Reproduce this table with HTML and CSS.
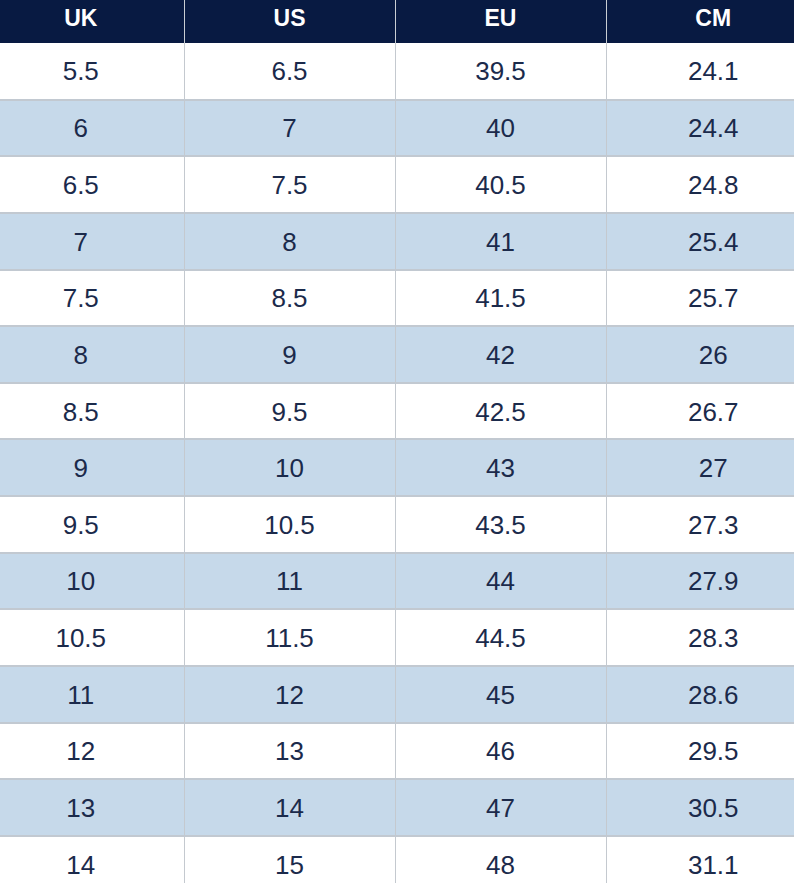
FILE: index.html
```html
<!DOCTYPE html>
<html>
<head>
<meta charset="utf-8">
<link rel="stylesheet" href="styles.css">
</head>
<body>
<table class="size-table">
  <thead>
    <tr><th>UK</th><th>US</th><th>EU</th><th>CM</th></tr>
  </thead>
  <tbody>
    <tr><td>5.5</td><td>6.5</td><td>39.5</td><td>24.1</td></tr>
    <tr><td>6</td><td>7</td><td>40</td><td>24.4</td></tr>
    <tr><td>6.5</td><td>7.5</td><td>40.5</td><td>24.8</td></tr>
    <tr><td>7</td><td>8</td><td>41</td><td>25.4</td></tr>
    <tr><td>7.5</td><td>8.5</td><td>41.5</td><td>25.7</td></tr>
    <tr><td>8</td><td>9</td><td>42</td><td>26</td></tr>
    <tr><td>8.5</td><td>9.5</td><td>42.5</td><td>26.7</td></tr>
    <tr><td>9</td><td>10</td><td>43</td><td>27</td></tr>
    <tr><td>9.5</td><td>10.5</td><td>43.5</td><td>27.3</td></tr>
    <tr><td>10</td><td>11</td><td>44</td><td>27.9</td></tr>
    <tr><td>10.5</td><td>11.5</td><td>44.5</td><td>28.3</td></tr>
    <tr><td>11</td><td>12</td><td>45</td><td>28.6</td></tr>
    <tr><td>12</td><td>13</td><td>46</td><td>29.5</td></tr>
    <tr><td>13</td><td>14</td><td>47</td><td>30.5</td></tr>
    <tr><td>14</td><td>15</td><td>48</td><td>31.1</td></tr>
  </tbody>
</table>
</body>
</html>
```
FILE: styles.css
```css
html, body {
  margin: 0;
  padding: 0;
  background: #ffffff;
  overflow: hidden;
}
.size-table {
  width: 794px;
  border-collapse: collapse;
  table-layout: fixed;
  font-family: "Liberation Sans", Arial, sans-serif;
}
.size-table th,
.size-table td {
  text-align: center;
  padding: 0;
}
.size-table th:nth-child(1), .size-table td:nth-child(1) { width: 184px; padding-right: 22px; }
.size-table th:nth-child(2), .size-table td:nth-child(2) { width: 211px; }
.size-table th:nth-child(3), .size-table td:nth-child(3) { width: 211px; }
.size-table th:nth-child(4), .size-table td:nth-child(4) { width: 188px; padding-left: 26px; }
.size-table th {
  background: #081a42;
  color: #ffffff;
  font-weight: bold;
  font-size: 23px;
  height: 43px;
  line-height: 1;
  padding-bottom: 7px;
  box-sizing: border-box;
  border-left: 1.5px solid #c9cdd3;
}
.size-table th:first-child, .size-table td:first-child { border-left: none; }
.size-table td {
  color: #1b2a4b;
  font-size: 26px;
  height: 56.64px;
  padding-top: 2px;
  box-sizing: border-box;
  border-left: 1.5px solid #c4c9cf;
  border-top: 2px solid #c2c9d1;
}
.size-table tbody tr:first-child td { border-top: none; }
.size-table tbody tr:nth-child(even) td {
  background: #c6d9ea;
}
```
